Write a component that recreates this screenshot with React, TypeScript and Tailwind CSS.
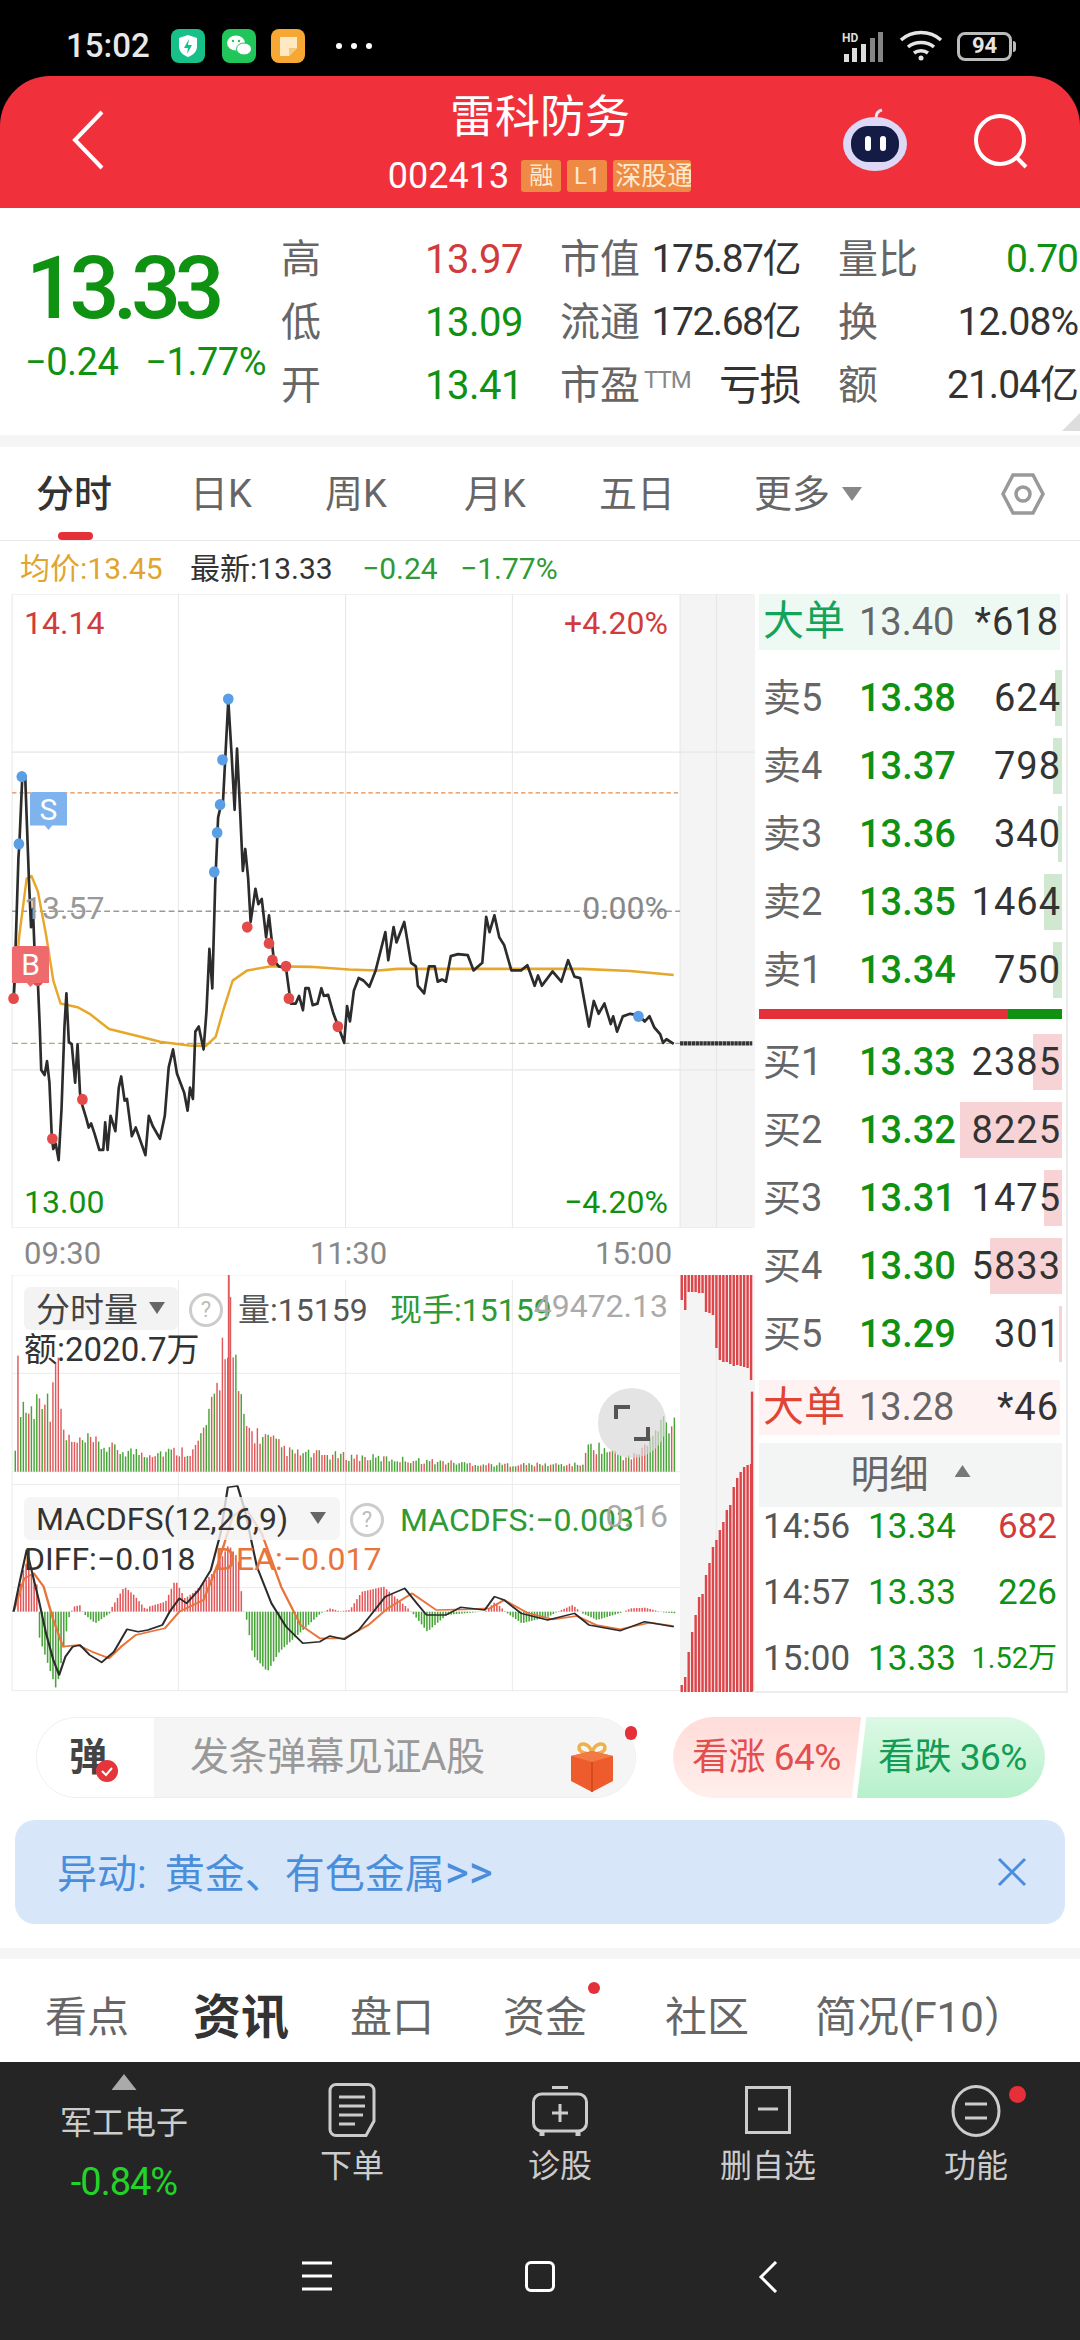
const GREEN = "text-[#0f9112]";

// price line, traced in chart units (1 unit = 1/2.063 px wide, 1/1.96 px tall)
const pricePts = "28,1075 30,1040 38,800 40,772 46,640 52,640 55,720 60,850 64,935 68,900 72,1000 78,1040 82,1130 85,1215 92,1225 97,1198 102,1240 107,1350 110,1370 115,1360 121,1392 127,1290 133,1130 137,1065 142,1160 148,1165 155,1240 160,1165 165,1260 170,1285 178,1310 183,1328 188,1320 195,1340 205,1372 213,1372 217,1318 222,1372 228,1305 238,1335 245,1250 250,1228 257,1275 262,1272 272,1345 280,1328 290,1355 300,1382 307,1305 315,1325 330,1350 340,1305 348,1210 357,1175 365,1222 380,1260 387,1295 392,1250 398,1272 403,1140 410,1130 420,1175 426,1100 432,978 438,1055 444,850 450,720 455,700 460,690 471,490 478,600 484,705 489,585 495,700 501,825 506,782 512,840 517,925 527,860 533,890 540,880 549,955 555,912 565,1000 575,1012 590,1015 600,1085 610,1085 617,1070 625,1098 630,1055 637,1055 645,1088 655,1085 663,1055 668,1070 677,1068 688,1105 698,1130 710,1162 716,1090 722,1120 730,1060 740,1035 750,1040 762,1052 775,1020 795,945 801,1000 812,935 818,965 834,925 848,1005 858,1012 862,1050 875,1065 885,1012 897,1012 903,1042 912,1038 920,1042 930,992 945,988 965,990 977,1020 995,1005 1003,915 1010,945 1020,912 1030,955 1040,970 1055,1020 1075,1020 1088,1010 1103,1050 1110,1030 1118,1050 1140,1022 1158,1042 1172,1000 1185,1032 1197,1035 1215,1130 1225,1080 1235,1105 1247,1085 1260,1125 1265,1110 1273,1140 1285,1110 1300,1105 1318,1108 1330,1120 1340,1110 1350,1132 1362,1145 1368,1162 1375,1155 1390,1164";
const avgPts = "28,1075 40,950 55,840 65,835 78,865 95,950 110,1040 125,1085 160,1092 185,1105 225,1135 290,1150 330,1160 390,1167 425,1168 445,1150 460,1100 480,1040 510,1020 560,1012 640,1013 720,1018 780,1020 820,1017 1000,1017 1200,1017 1300,1021 1390,1029";
const blueDots = [[45, 640], [39, 772], [471, 488], [459, 607], [454, 695], [448, 750], [442, 827], [1317, 1110]];
const redDots = [[28, 1075], [78, 1040], [108, 1350], [170, 1273], [510, 935], [555, 967], [562, 1000], [590, 1012], [596, 1075], [697, 1130]];

const diffPts = "28,1085 40,1000 55,900 65,960 80,1050 95,1150 110,1230 122,1275 135,1220 150,1190 165,1185 185,1215 210,1237 235,1205 262,1138 285,1145 305,1140 335,1125 350,1085 370,1045 385,1060 410,1020 435,960 455,850 470,712 490,708 505,780 530,950 560,1060 590,1130 625,1180 660,1175 680,1158 710,1168 740,1140 765,1095 795,1040 835,1015 860,1060 880,1095 920,1095 950,1072 1000,1080 1020,1040 1040,1050 1075,1090 1130,1110 1185,1090 1215,1125 1280,1142 1330,1115 1390,1130";
const deaPts = "28,1085 50,985 70,970 90,1010 110,1110 130,1190 160,1185 190,1205 225,1225 250,1190 280,1155 340,1135 370,1085 420,1050 450,940 480,800 505,770 540,850 580,1010 620,1125 660,1165 710,1165 760,1125 800,1075 850,1030 900,1080 960,1078 1010,1075 1040,1050 1090,1090 1140,1108 1190,1098 1230,1125 1280,1138 1340,1118 1390,1128";

// [x, height] pairs, interpolated to get the bar envelopes
const volEnv = [[30, 105], [35, 335], [42, 250], [50, 230], [60, 205], [70, 235], [80, 265], [88, 325], [100, 195], [110, 445], [120, 305], [130, 135], [150, 95], [180, 105], [240, 75], [300, 65], [400, 75], [440, 225], [460, 455], [472, 590], [478, 445], [490, 255], [510, 145], [560, 105], [600, 65], [700, 55], [1000, 25], [1200, 25], [1215, 95], [1300, 45], [1340, 105], [1365, 175], [1392, 175]];
const macdEnv = [[30, 0], [50, 150], [75, 80], [78, 0], [80, -80], [115, -235], [140, -20], [150, 15], [165, 20], [170, -5], [195, -35], [225, -5], [230, 15], [255, 75], [275, 50], [300, 5], [305, 15], [340, 30], [360, 95], [380, 40], [400, 60], [440, 120], [470, 200], [490, 160], [500, 1], [505, -5], [520, -130], [550, -180], [575, -120], [620, -60], [660, -5], [680, 10], [700, 1], [720, 5], [745, 60], [790, 75], [840, 10], [850, -5], [880, -60], [920, -10], [1000, 1], [1020, 30], [1045, -5], [1075, -35], [1130, -15], [1150, 1], [1180, 20], [1200, -5], [1230, -25], [1280, -3], [1300, 10], [1330, 12], [1365, -2], [1392, -5]];

const lerp = (env: number[][], x: number) => {
  for (let i = 1; i < env.length; i++) {
    if (x <= env[i][0]) {
      const [x0, y0] = env[i - 1];
      const [x1, y1] = env[i];
      return y0 + ((y1 - y0) * (x - x0)) / (x1 - x0);
    }
  }
  return env[env.length - 1][1];
};
const noise = (i: number) => Math.abs(Math.sin(i * 12.9898) * 43758.5453) % 1;

const barXs = Array.from({ length: 246 }, (_, i) => 30 + i * 5.55);

// side strip bars: [bottom of the top bar, top of the bottom bar]
const sideBars = [
  [1300, 1685], [1310, 1677], [1292, 1652], [1292, 1632], [1292, 1615], [1293, 1597], [1293, 1594], [1312, 1575],
  [1313, 1563], [1315, 1547], [1348, 1540], [1360, 1530], [1362, 1522], [1362, 1510], [1364, 1505], [1366, 1487],
  [1365, 1478], [1366, 1472], [1367, 1467], [1368, 1465], [1380, 1464],
];

const askRows = [
  { label: "卖5", price: "13.38", qty: "624", depth: "w-[7px]" },
  { label: "卖4", price: "13.37", qty: "798", depth: "w-[9px]" },
  { label: "卖3", price: "13.36", qty: "340", depth: "w-[4px]" },
  { label: "卖2", price: "13.35", qty: "1464", depth: "w-[18px]" },
  { label: "卖1", price: "13.34", qty: "750", depth: "w-[9px]" },
];
const bidRows = [
  { label: "买1", price: "13.33", qty: "2385", depth: "w-[29px]" },
  { label: "买2", price: "13.32", qty: "8225", depth: "w-[102px]" },
  { label: "买3", price: "13.31", qty: "1475", depth: "w-[18px]" },
  { label: "买4", price: "13.30", qty: "5833", depth: "w-[72px]" },
  { label: "买5", price: "13.29", qty: "301", depth: "w-[3px]" },
];
const quoteRows = [
  ["高", "13.97", "text-[#d13b3b]", "市值", "175.87亿", "量比", "0.70", GREEN],
  ["低", "13.09", GREEN, "流通", "172.68亿", "换", "12.08%", "text-[#333]"],
  ["开", "13.41", GREEN, "市盈", "亏损", "额", "21.04亿", "text-[#333]"],
];

function StatusBar() {
  return (
    <div className="h-[76px] bg-black flex items-center pl-[66px] pr-[68px] pt-[16px] text-[#e8e8e8]">
      <span className="text-[33px] font-medium w-[105px]">15:02</span>
      <svg width="34" height="34" viewBox="0 0 34 34" className="mr-[17px]">
        <rect width="34" height="34" rx="8" fill="#17c088" />
        <path d="M17 6l9 3v8c0 6-4 9-9 11-5-2-9-5-9-11V9z" fill="#fff" />
        <path d="M18 10l-5 9h4l-1 6 5-9h-4z" fill="#17c088" />
      </svg>
      <svg width="34" height="34" viewBox="0 0 34 34" className="mr-[15px]">
        <rect width="34" height="34" rx="8" fill="#20c65a" />
        <ellipse cx="14" cy="14" rx="9" ry="7.5" fill="#fff" />
        <ellipse cx="22" cy="20" rx="7.5" ry="6" fill="#fff" stroke="#20c65a" />
        <circle cx="11" cy="12" r="1.2" fill="#20c65a" />
        <circle cx="17" cy="12" r="1.2" fill="#20c65a" />
      </svg>
      <svg width="34" height="34" viewBox="0 0 34 34" className="mr-[31px]">
        <rect width="34" height="34" rx="8" fill="#f7a733" />
        <path d="M9 8h17v11l-8 8H9z" fill="#ffe9c2" />
        <path d="M18 27l8-8h-8z" fill="#f7c877" />
      </svg>
      <span className="flex gap-[9px]">
        <i className="w-[6px] h-[6px] rounded-full bg-white" />
        <i className="w-[6px] h-[6px] rounded-full bg-white" />
        <i className="w-[6px] h-[6px] rounded-full bg-white" />
      </span>
      <span className="flex-1" />
      <svg width="42" height="32" viewBox="0 0 42 32" className="mr-[15px]">
        <text x="0" y="12" fontSize="12" fontWeight="700" fill="#ddd" fontFamily="Roboto">HD</text>
        <g fill="#ddd">
          <rect x="2" y="24" width="5" height="8" />
          <rect x="10" y="18" width="5" height="14" />
          <rect x="19" y="14" width="5" height="18" />
          <rect x="28" y="8" width="5" height="24" opacity=".6" />
          <rect x="36" y="2" width="5" height="30" opacity=".6" />
        </g>
      </svg>
      <svg width="44" height="34" viewBox="0 0 44 34" fill="none" stroke="#e5e5e5" strokeWidth="3.5" className="mr-[14px]">
        <path d="M2 11c11-10 29-10 40 0" />
        <path d="M9 18c7-6 19-6 26 0" />
        <path d="M15 24c4-3 10-3 14 0" />
        <circle cx="22" cy="29" r="2.5" fill="#e5e5e5" stroke="none" />
      </svg>
      <div className="relative w-[55px] h-[29px] border-[3px] border-[#bbb] rounded-[8px] flex items-center justify-center text-[22px] font-bold leading-none text-[#e5e5e5]">
        94
        <i className="absolute right-[-7px] top-[6px] w-[3px] h-[11px] bg-[#bbb] rounded-r" />
      </div>
    </div>
  );
}

function Header() {
  return (
    <div className="bg-black">
      <header className="relative h-[132px] bg-[#f0313c] rounded-t-[50px] flex flex-col items-center text-white">
        <div className="text-[45px] leading-[50px] mt-[17px]">雷科防务</div>
        <div className="flex items-center mt-[16px] h-[34px] ml-[-1px]">
          <span className="text-[36px] mr-[12px]">002413</span>
          <span className="bg-[#ee8a44] text-[#ffe9cf] text-[24px] leading-[32px] w-[40px] text-center rounded-[3px] mr-[6px]">融</span>
          <span className="bg-[#ee8a44] text-[#ffe9cf] text-[24px] leading-[32px] w-[40px] text-center rounded-[3px] mr-[6px]">L1</span>
          <span className="bg-[#ee8a44] text-[#ffe9cf] text-[26px] leading-[32px] w-[78px] overflow-hidden whitespace-nowrap rounded-[3px] pl-[2px]">深股通</span>
        </div>
        <svg width="36" height="60" viewBox="0 0 36 60" fill="none" stroke="#fff" strokeWidth="4" className="absolute left-[70px] top-[34px]">
          <path d="M32 2L5 30l27 28" />
        </svg>
        <svg width="70" height="66" viewBox="0 0 70 66" className="absolute left-[840px] top-[30px]">
          <path d="M36 12c0-4 2-7 6-8" fill="none" stroke="#e8e2f5" strokeWidth="3" />
          <ellipse cx="35" cy="38" rx="32" ry="27" fill="#dcd8f5" />
          <rect x="11" y="20" width="48" height="36" rx="17" fill="#141c45" />
          <rect x="25" y="30" width="6" height="15" rx="3" fill="#fff" />
          <rect x="40" y="30" width="6" height="15" rx="3" fill="#fff" />
        </svg>
        <svg width="60" height="60" viewBox="0 0 60 60" fill="none" stroke="#fff" strokeWidth="4" className="absolute left-[974px] top-[38px]">
          <circle cx="26" cy="26" r="24" />
          <path d="M42 43l10 10" />
        </svg>
      </header>
    </div>
  );
}

function Quote() {
  return (
    <section className="h-[227px] bg-white flex relative">
      <div className="w-[281px] shrink-0 pl-[26px] pt-[35px]">
        <div className={`text-[88px] leading-[90px] font-medium tracking-[-6.5px] ${GREEN}`}>13.33</div>
        <div className={`flex gap-[27px] text-[38px] leading-[38px] mt-[10px] ml-[-1px] tracking-[-0.5px] whitespace-nowrap ${GREEN}`}>
          <span>−0.24</span>
          <span>−1.77%</span>
        </div>
      </div>
      <div className="pt-[20px] w-[799px] shrink-0">
        {quoteRows.map(([a, b, bc, c, d, e, f, fc]) => (
          <div key={a} className="h-[63px] flex items-center text-[40px] text-[#666] whitespace-nowrap">
            <div className="w-[242px] flex justify-between">
              <span>{a}</span>
              <span className={`${bc} tracking-[-0.5px]`}>{b}</span>
            </div>
            <div className="w-[240px] ml-[37px] flex justify-between items-center">
              <span className="relative">
                {c}
                {c === "市盈" && <sup className="absolute left-[84px] top-[12px] text-[24px] text-[#888] leading-none tracking-[-1px]">TTM</sup>}
              </span>
              <span className={`text-[#333] tracking-[-1.5px] ${d === "亏损" ? "text-[42px]" : "text-[39px]"}`}>{d}</span>
            </div>
            <div className="w-[240px] ml-[38px] flex justify-between">
              <span>{e}</span>
              <span className={`${fc} text-[39px] tracking-[-1px]`}>{f}</span>
            </div>
          </div>
        ))}
      </div>
      <i className="absolute right-0 bottom-[4px] w-[18px] h-[18px] bg-[#ddd] [clip-path:polygon(100%_0,100%_100%,0_100%)]" />
    </section>
  );
}

function Tabs() {
  return (
    <nav className="relative h-[94px] bg-white border-b border-[#e8e8e8] flex items-center text-[38px] text-[#666] pt-[2px]">
      <span className="absolute left-[36px] font-medium text-[#333]">分时</span>
      <i className="absolute left-[58px] bottom-[0px] w-[35px] h-[8px] rounded-full bg-[#e5303a]" />
      <span className="absolute left-[190px]">日K</span>
      <span className="absolute left-[325px]">周K</span>
      <span className="absolute left-[464px]">月K</span>
      <span className="absolute left-[599px]">五日</span>
      <span className="absolute left-[754px]">更多</span>
      <i className="absolute left-[842px] top-[40px] w-[20px] h-[14px] bg-[#888] [clip-path:polygon(0_0,100%_0,50%_100%)]" />
      <svg width="46" height="46" viewBox="0 0 46 46" fill="none" stroke="#999" strokeWidth="3.5" className="absolute left-[1000px] top-[24px]">
        <path d="M13 4h20l10 19-10 19H13L3 23z" />
        <circle cx="23" cy="23" r="7" />
      </svg>
    </nav>
  );
}

function Legend() {
  return (
    <div className="h-[53px] bg-white flex items-center pl-[20px] text-[30px] whitespace-nowrap pt-[2px]">
      <span className="text-[#e0a52e] w-[170px]">均价:13.45</span>
      <span className="text-[#333] w-[172px]">最新:13.33</span>
      <span className="text-[#2f9a35] w-[98px]">−0.24</span>
      <span className="text-[#2f9a35]">−1.77%</span>
    </div>
  );
}

function PriceChart() {
  return (
    <div className="relative h-[634px] text-[32px] leading-none">
      <svg className="absolute inset-0 w-full h-full" viewBox="0 282 1557.6 1243" preserveAspectRatio="none" fill="none">
        <rect x="1403" y="282" width="155" height="1243" fill="#f4f4f4" />
        <g stroke="#e6e6e6" strokeWidth="2">
          <path d="M25 282H1552M25 592H1557M25 1215H1557M25 1525H1552" />
          <path d="M25 282V1525M368 282V1525M713 282V1525M1057 282V1525M1403 282V1525M1478 282V1525" />
        </g>
        <path d="M25 672H1403" stroke="#e58a4a" strokeWidth="2.5" strokeDasharray="9 6" />
        <path d="M25 904H1403" stroke="#999" strokeWidth="2.5" strokeDasharray="12 7" />
        <path d="M25 1163H1403" stroke="#b5a673" strokeWidth="2.5" strokeDasharray="12 7" />
        <polyline points={avgPts} stroke="#e6a72a" strokeWidth="5" strokeLinejoin="round" />
        <polyline points={pricePts} stroke="#2c2c2c" strokeWidth="5.5" strokeLinejoin="round" />
        <path d="M1403 1163H1552" stroke="#333" strokeWidth="8" strokeDasharray="7 1" />
        {blueDots.map(([x, y]) => (
          <circle key={`${x}-${y}`} cx={x} cy={y} r="11" fill="#5a9fe6" />
        ))}
        {redDots.map(([x, y]) => (
          <circle key={`${x}-${y}`} cx={x} cy={y} r="11" fill="#e34a4a" />
        ))}
      </svg>
      <span className="absolute left-[24px] top-[13px] text-[#d13b3b]">14.14</span>
      <span className="absolute right-[87px] top-[13px] text-[#d13b3b]">+4.20%</span>
      <span className="absolute left-[24px] top-[298px] text-[#999]">13.57</span>
      <span className="absolute right-[87px] top-[298px] text-[#888]">0.00%</span>
      <span className="absolute left-[24px] top-[592px] text-[#0f9112]">13.00</span>
      <span className="absolute right-[87px] top-[592px] text-[#0f9112]">−4.20%</span>
      <span className="absolute left-[30px] top-[198px] w-[37px] h-[38px] rounded-[3px] bg-[#7fb3ee] text-[#fff] text-[30px] flex items-center justify-center pb-[3px] [clip-path:polygon(0_0,100%_0,100%_88%,60%_88%,50%_100%,40%_88%,0_88%)]">S</span>
      <span className="absolute left-[12px] top-[352px] w-[37px] h-[41px] rounded-[3px] bg-[#ef6a6c] text-[#fff] text-[30px] flex items-center justify-center pb-[3px] [clip-path:polygon(0_0,100%_0,100%_90%,60%_90%,50%_100%,40%_90%,0_90%)]">B</span>
    </div>
  );
}

function Help({ className }: { className: string }) {
  return (
    <span className={`absolute w-[34px] h-[34px] rounded-full border-[3px] border-[#ccc] text-[#bbb] text-[22px] flex items-center justify-center ${className}`}>?</span>
  );
}

function Indicators() {
  return (
    <div className="relative h-[417px] text-[32px] leading-none whitespace-nowrap">
      <svg className="absolute inset-0 w-full h-full" viewBox="0 75 1557.6 1251" preserveAspectRatio="none" fill="none">
        <rect x="1403" y="75" width="155" height="1251" fill="#f4f4f4" />
        <g stroke="#e6e6e6" strokeWidth="2">
          <path d="M25 75H1403M25 370H1403M25 665H1403M25 703H1403M25 1013H1403M25 1322H1403" />
          <path d="M25 75V1322M368 90V1322M713 90V1322M1057 90V1322M1478 75V1322" />
        </g>
        {barXs.map((x, i) => {
          const h = lerp(volEnv, x) * (0.6 + 0.5 * noise(i));
          return <rect key={i} x={x} y={665 - h} width="3" height={h} fill={noise(i + 7) > 0.55 ? "#e05a5c" : "#47a537"} />;
        })}
        <rect x="470" y="75" width="4" height="590" fill="#e05a5c" />
        {barXs.map((x, i) => {
          const v = lerp(macdEnv, x);
          return <rect key={i} x={x} y={v > 0 ? 1085 - v : 1085} width="3.2" height={Math.abs(v)} fill={v > 0 ? "#e2585a" : "#47a537"} />;
        })}
        <polyline points={deaPts} stroke="#e8743c" strokeWidth="5" strokeLinejoin="round" />
        <polyline points={diffPts} stroke="#2c2c2c" strokeWidth="4.5" strokeLinejoin="round" />
        {sideBars.map(([top, bottom], i) => {
          const x = 1404 + i * 7.15;
          return (
            <g key={i} fill="#dd4549">
              <rect x={x} y="75" width="5" height={(top - 1275) * 3} />
              <rect x={x} y={(bottom - 1275) * 3 + 75} width="5" height={(1692 - bottom) * 3} />
            </g>
          );
        })}
        <rect x="1549" y="425" width="5" height="900" fill="#dd4549" />
      </svg>
      <div className="absolute left-[24px] top-[12px] w-[154px] h-[43px] rounded-[6px] bg-[#f2f2f2]/90" />
      <span className="absolute left-[36px] top-[18px] text-[#444] text-[34px]">分时量</span>
      <i className="absolute left-[149px] top-[27px] w-[16px] h-[12px] bg-[#666] [clip-path:polygon(0_0,100%_0,50%_100%)]" />
      <Help className="left-[189px] top-[18px]" />
      <span className="absolute left-[238px] top-[19px] text-[#555] text-[32px]">量:15159</span>
      <span className="absolute left-[390px] top-[19px] text-[#2f9a35] text-[32px]">现手:15159</span>
      <span className="absolute right-[87px] top-[15px] text-[#aaa]">49472.13</span>
      <span className="absolute left-[24px] top-[58px] text-[#333] text-[33px]">额:2020.7万</span>
      <div className="absolute left-[598px] top-[113px] w-[68px] h-[70px] rounded-full bg-[#d9d9d9]/70" />
      <svg width="36" height="36" viewBox="0 0 36 36" fill="none" stroke="#555" strokeWidth="4" className="absolute left-[614px] top-[130px]">
        <path d="M2 14V2h14M34 22v12H20" />
      </svg>
      <div className="absolute left-[24px] top-[222px] w-[316px] h-[43px] rounded-[6px] bg-[#f2f2f2]/80" />
      <span className="absolute left-[36px] top-[228px] text-[#333] text-[32px]">MACDFS(12,26,9)</span>
      <i className="absolute left-[310px] top-[237px] w-[16px] h-[12px] bg-[#666] [clip-path:polygon(0_0,100%_0,50%_100%)]" />
      <Help className="left-[350px] top-[228px]" />
      <span className="absolute left-[400px] top-[229px] text-[#2f9a35] text-[32px]">MACDFS:−0.003</span>
      <span className="absolute right-[87px] top-[225px] text-[#aaa]">0.16</span>
      <span className="absolute left-[24px] top-[268px] text-[#333] text-[32px]">DIFF:−0.018</span>
      <span className="absolute left-[215px] top-[268px] text-[#e8743c] text-[32px]">DEA:−0.017</span>
    </div>
  );
}

function BookRow({ label, price, qty, depth, tone }: { label: string; price: string; qty: string; depth: string; tone: string }) {
  return (
    <div className="relative h-[68px] flex items-center pl-[8px] pr-[5px] text-[38px]">
      <i className={`absolute right-[4px] top-[6px] h-[56px] ${depth} ${tone}`} />
      <span className="relative w-[96px] text-[#666]">{label}</span>
      <span className={`relative ${GREEN} font-medium`}>{price}</span>
      <span className="relative flex-1 text-right text-[#333] tracking-[1px]">{qty}</span>
    </div>
  );
}

function OrderBook() {
  return (
    <aside className="w-[313px] border-r-[2px] border-b-[2px] border-[#ececec] h-[1099px]">
      <div className="ml-[4px] mr-[6px] h-[60px]">
        <div className="w-full h-[56px] bg-[#eff9f3] flex items-center pl-[4px] pr-[1px] text-[38px]">
          <span className="w-[96px] text-[#12a45a] text-[41px]">大单</span>
          <span className="text-[#666]">13.40</span>
          <span className="flex-1 text-right text-[#333] tracking-[1px]">*618</span>
        </div>
      </div>
      <div className="pt-[10px]">
        {askRows.map((r) => (
          <BookRow key={r.label} {...r} tone="bg-[#cfe8cf]" />
        ))}
      </div>
      <div className="ml-[4px] mr-[4px] h-[10px] flex my-[5px]">
        <i className="w-[249px] bg-[#e5303a]" />
        <i className="flex-1 bg-[#0f9112]" />
      </div>
      <div className="pt-[4px]">
        {bidRows.map((r) => (
          <BookRow key={r.label} {...r} tone="bg-[#f8d3d6]" />
        ))}
      </div>
      <div className="ml-[4px] mr-[6px] mt-[12px] h-[55px] bg-[#fff2f2] flex items-center pl-[4px] pr-[1px] text-[38px]">
        <span className="w-[96px] text-[#e04434] text-[41px]">大单</span>
        <span className="text-[#666]">13.28</span>
        <span className="flex-1 text-right text-[#333] tracking-[1px]">*46</span>
      </div>
      <div className="ml-[4px] mr-[4px] mt-[8px] h-[64px] bg-[#f3f4f4] flex items-center justify-center text-[39px] text-[#666]">
        明细
        <i className="ml-[26px] mt-[-8px] w-[16px] h-[12px] bg-[#777] [clip-path:polygon(50%_0,100%_100%,0_100%)]" />
      </div>
      <div className="pl-[8px] pr-[9px] text-[35px] flex flex-col gap-[26px]">
        {[
          ["14:56", "13.34", "682", "text-[#d13b3b]"],
          ["14:57", "13.33", "226", GREEN],
          ["15:00", "13.33", "1.52万", GREEN],
        ].map(([t, p, q, c]) => (
          <div key={t} className="h-[40px] flex items-center">
            <span className="w-[105px] text-[#555]">{t}</span>
            <span className={GREEN}>{p}</span>
            <span className={`flex-1 text-right ${c} ${q.length > 3 ? "text-[29px]" : ""}`}>{q}</span>
          </div>
        ))}
      </div>
    </aside>
  );
}

function Gift() {
  return (
    <svg width="46" height="52" viewBox="0 0 46 52">
      <path d="M23 12c-4-10-13-10-13-4 0 4 7 6 13 6 6 0 13-2 13-6 0-6-9-6-13 4z" fill="none" stroke="#eeb24b" strokeWidth="3.5" />
      <path d="M2 16l21-5 21 5v25L23 52 2 41z" fill="#ee5b2c" />
      <path d="M2 16l21 6 21-6-21-5z" fill="#f47a45" />
      <path d="M23 22v30" stroke="#d64a1e" strokeWidth="2" />
    </svg>
  );
}

function Barrage() {
  return (
    <div className="h-[81px] flex mt-[24px]">
      <div className="relative ml-[36px] w-[600px] h-[81px] rounded-full border border-[#eee] overflow-hidden flex">
        <div className="relative w-[117px] shrink-0 bg-white pl-[32px] flex items-center">
          <span className="text-[38px] font-bold text-[#444]">弹</span>
          <svg width="22" height="24" viewBox="0 0 22 24" className="absolute left-[59px] top-[41px]">
            <circle cx="11" cy="12" r="11" fill="#e5343a" />
            <path d="M6 12l4 4 6-7" fill="none" stroke="#fff" strokeWidth="2" />
          </svg>
        </div>
        <div className="flex-1 bg-[#f5f5f5] flex items-center pl-[36px] text-[39px] text-[#999] tracking-[-0.5px]">发条弹幕见证A股</div>
        <div className="absolute left-[532px] top-[22px]"><Gift /></div>
      </div>
      <i className="relative left-[-11px] top-[9px] w-[12px] h-[14px] rounded-full bg-[#e5303a]" />
      <div className="relative ml-[25px] w-[372px] h-[81px]">
        <div className="absolute left-0 top-0 w-[188px] h-full rounded-l-full bg-gradient-to-b from-[#ffdcd9] to-[#ffefec] flex items-center pl-[19px] text-[37px] text-[#e34f4f] whitespace-nowrap tracking-[-0.5px] [clip-path:polygon(0_0,100%_0,95%_100%,0_100%)]">看涨 64%</div>
        <div className="absolute right-0 top-0 w-[188px] h-full rounded-r-full bg-gradient-to-b from-[#dcf9e5] to-[#b7f0cb] flex items-center pl-[21px] text-[37px] text-[#129c55] whitespace-nowrap tracking-[-0.5px] [clip-path:polygon(5%_0,100%_0,100%_100%,0_100%)]">看跌 36%</div>
      </div>
    </div>
  );
}

function Alert() {
  return (
    <div className="mx-[15px] mt-[22px] h-[104px] rounded-[20px] bg-[#d8e6fa] flex items-center justify-between pl-[42px] pr-[38px] text-[40px] text-[#4a8edb]">
      <span>异动:<span className="ml-[18px]">黄金、有色金属</span><span className="text-[46px]">&gt;&gt;</span></span>
      <svg width="30" height="30" viewBox="0 0 30 30" fill="none" stroke="#4a8edb" strokeWidth="3">
        <path d="M2 2l26 26M28 2L2 28" />
      </svg>
    </div>
  );
}

function InfoTabs() {
  return (
    <div className="h-[103px] bg-white flex items-center pl-[45px] pt-[14px] text-[42px] text-[#666] whitespace-nowrap relative">
      <span className="w-[148px]">看点</span>
      <span className="w-[157px] font-bold text-[#333] text-[48px] leading-none">资讯</span>
      <span className="w-[153px]">盘口</span>
      <span className="w-[162px] relative">
        资金
        <i className="absolute left-[85px] top-[-4px] w-[12px] h-[12px] rounded-full bg-[#e5303a]" />
      </span>
      <span className="w-[150px]">社区</span>
      <span>简况(F10）</span>
    </div>
  );
}

function FooterBar() {
  return (
    <footer className="h-[279px] bg-[#252525] text-[#ccc]">
      <div className="h-[170px] grid grid-cols-[248px_repeat(4,208px)]">
        <div className="flex flex-col items-center pt-[12px]">
          <i className="w-[25px] h-[16px] bg-[#aaa] [clip-path:polygon(50%_0,100%_100%,0_100%)]" />
          <span className="text-[32px] leading-[38px] mt-[14px]">军工电子</span>
          <span className="text-[38px] leading-[38px] mt-[21px] text-[#22d42a] tracking-[-1px]">-0.84%</span>
        </div>
        <div className="flex flex-col items-center pt-[21px]">
          <svg width="48" height="54" viewBox="0 0 48 54" fill="none" stroke="#ccc" strokeWidth="3">
            <path d="M8 1.5h32a6 6 0 0 1 6 6V38l-8 14.5H8a6 6 0 0 1-6-6v-39a6 6 0 0 1 6-6z" />
            <path d="M11 14h26M11 23h26M11 32h24M11 41h16" />
          </svg>
          <span className="text-[32px] leading-[38px] mt-[10px]">下单</span>
        </div>
        <div className="flex flex-col items-center pt-[24px]">
          <svg width="56" height="51" viewBox="0 0 56 51" fill="none" stroke="#ccc" strokeWidth="3">
            <path d="M20 1.5h16" />
            <rect x="1.5" y="8" width="53" height="37" rx="8" />
            <path d="M28 18v18M20 27h16" />
            <path d="M10 45v5M46 45v5" strokeWidth="5" />
          </svg>
          <span className="text-[32px] leading-[38px] mt-[10px]">诊股</span>
        </div>
        <div className="flex flex-col items-center pt-[24px]">
          <svg width="46" height="48" viewBox="0 0 46 48" fill="none" stroke="#ccc" strokeWidth="3" className="mb-[3px]">
            <rect x="1.5" y="1.5" width="43" height="45" />
            <path d="M13 23h20" />
          </svg>
          <span className="text-[32px] leading-[38px] mt-[10px]">删自选</span>
        </div>
        <div className="relative flex flex-col items-center pt-[23px]">
          <svg width="50" height="52" viewBox="0 0 50 52" fill="none" stroke="#ccc" strokeWidth="3">
            <ellipse cx="25" cy="26" rx="23" ry="24.5" />
            <path d="M14 19h22M14 33h22" />
          </svg>
          <span className="text-[32px] leading-[38px] mt-[10px]">功能</span>
          <i className="absolute left-[137px] top-[24px] w-[17px] h-[17px] rounded-full bg-[#e5303a]" />
        </div>
      </div>
      <div className="relative flex items-start pt-[29px]">
        <svg width="30" height="30" viewBox="0 0 30 30" stroke="#fff" strokeWidth="3" className="ml-[302px]">
          <path d="M0 2h30M0 15h30M0 28h30" />
        </svg>
        <span className="ml-[193px] w-[30px] h-[31px] border-[3px] border-white rounded-[6px]" />
        <svg width="20" height="32" viewBox="0 0 20 32" fill="none" stroke="#fff" strokeWidth="3" className="ml-[203px]">
          <path d="M18 1L3 16l15 15" />
        </svg>
      </div>
    </footer>
  );
}

export default function App() {
  return (
    <div className="w-[1080px] h-[2340px] overflow-hidden bg-white [font-family:Roboto,'Noto_Sans_CJK_SC',sans-serif]">
      <StatusBar />
      <Header />
      <Quote />
      <div className="h-[12px] bg-[#f5f5f5]" />
      <Tabs />
      <Legend />
      <div className="flex">
        <div className="w-[755px] shrink-0">
          <PriceChart />
          <div className="h-[47px] flex items-center pt-[4px] text-[31px] text-[#888] leading-none">
            <span className="ml-[24px] w-[286px]">09:30</span>
            <span className="w-[285px]">11:30</span>
            <span>15:00</span>
          </div>
          <Indicators />
        </div>
        <OrderBook />
      </div>
      <Barrage />
      <Alert />
      <div className="h-[11px] bg-[#f5f5f5] mt-[24px]" />
      <InfoTabs />
      <FooterBar />
    </div>
  );
}
